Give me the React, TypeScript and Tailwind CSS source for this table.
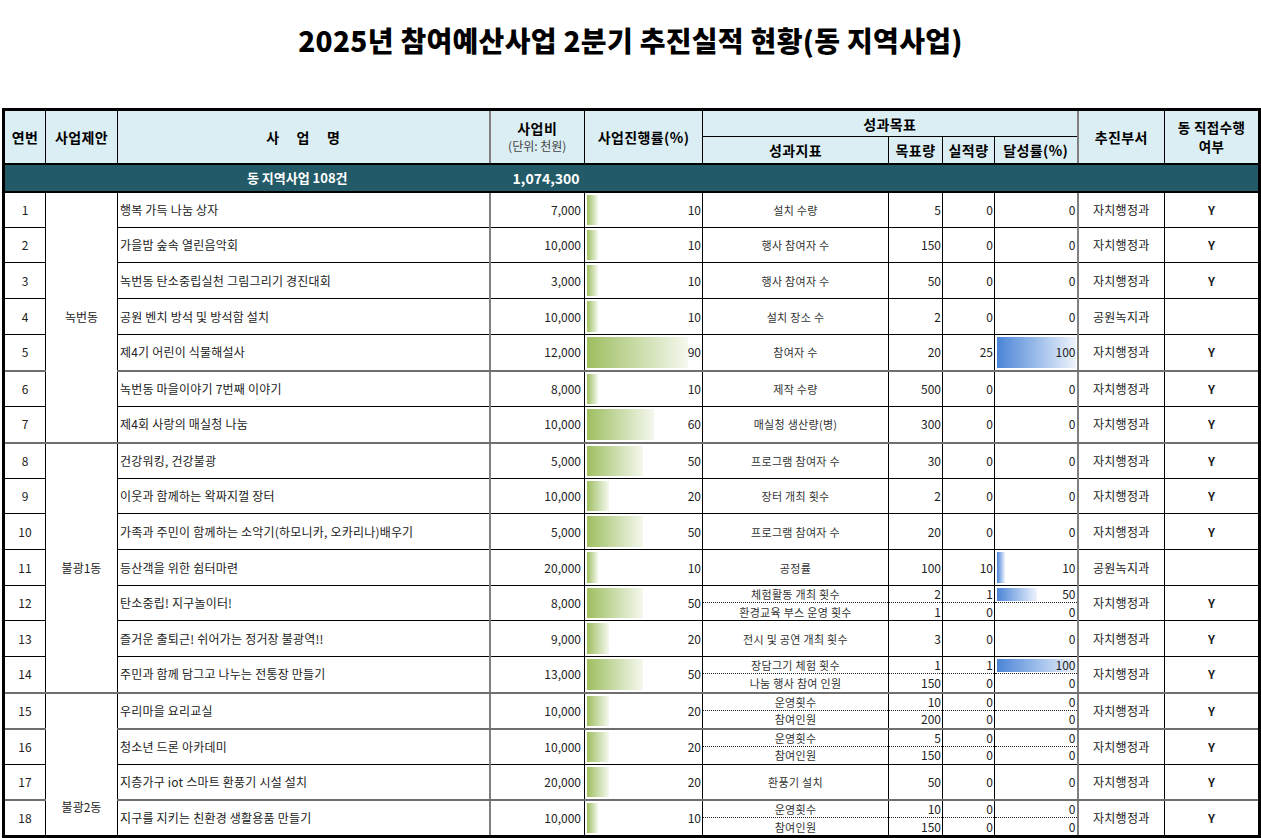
import React from "react";

type Metric = { label: string; target: string; actual: string; rate: number };
type Row = {
  no: number;
  name: string;
  cost: string;
  prog: number;
  metrics: Metric[];
  dept: string;
  y: string;
  h: 35 | 36;
  thick?: boolean;
};

const m = (label: string, target: string, actual: string, rate = 0): Metric => ({ label, target, actual, rate });

const rows: Row[] = [
  { no: 1, name: "행복 가득 나눔 상자", cost: "7,000", prog: 10, metrics: [m("설치 수량", "5", "0")], dept: "자치행정과", y: "Y", h: 36 },
  { no: 2, name: "가을밤 숲속 열린음악회", cost: "10,000", prog: 10, metrics: [m("행사 참여자 수", "150", "0")], dept: "자치행정과", y: "Y", h: 35 },
  { no: 3, name: "녹번동 탄소중립실천 그림그리기 경진대회", cost: "3,000", prog: 10, metrics: [m("행사 참여자 수", "50", "0")], dept: "자치행정과", y: "Y", h: 36 },
  { no: 4, name: "공원 벤치 방석 및 방석함 설치", cost: "10,000", prog: 10, metrics: [m("설치 장소 수", "2", "0")], dept: "공원녹지과", y: "", h: 36 },
  { no: 5, name: "제4기 어린이 식물해설사", cost: "12,000", prog: 90, metrics: [m("참여자 수", "20", "25", 100)], dept: "자치행정과", y: "Y", h: 36, thick: true },
  { no: 6, name: "녹번동 마을이야기 7번째 이야기", cost: "8,000", prog: 10, metrics: [m("제작 수량", "500", "0")], dept: "자치행정과", y: "Y", h: 36 },
  { no: 7, name: "제4회 사랑의 매실청 나눔", cost: "10,000", prog: 60, metrics: [m("매실청 생산량(병)", "300", "0")], dept: "자치행정과", y: "Y", h: 36, thick: true },
  { no: 8, name: "건강워킹, 건강불광", cost: "5,000", prog: 50, metrics: [m("프로그램 참여자 수", "30", "0")], dept: "자치행정과", y: "Y", h: 36 },
  { no: 9, name: "이웃과 함께하는 왁짜지껄 장터", cost: "10,000", prog: 20, metrics: [m("장터 개최 횟수", "2", "0")], dept: "자치행정과", y: "Y", h: 35 },
  { no: 10, name: "가족과 주민이 함께하는 소악기(하모니카, 오카리나)배우기", cost: "5,000", prog: 50, metrics: [m("프로그램 참여자 수", "20", "0")], dept: "자치행정과", y: "Y", h: 36 },
  { no: 11, name: "등산객을 위한 쉼터마련", cost: "20,000", prog: 10, metrics: [m("공정률", "100", "10", 10)], dept: "공원녹지과", y: "", h: 36 },
  { no: 12, name: "탄소중립! 지구놀이터!", cost: "8,000", prog: 50, metrics: [m("체험활동 개최 횟수", "2", "1", 50), m("환경교육 부스 운영 횟수", "1", "0")], dept: "자치행정과", y: "Y", h: 35 },
  { no: 13, name: "즐거운 출퇴근! 쉬어가는 정거장 불광역!!", cost: "9,000", prog: 20, metrics: [m("전시 및 공연 개최 횟수", "3", "0")], dept: "자치행정과", y: "Y", h: 36 },
  { no: 14, name: "주민과 함께 담그고 나누는 전통장 만들기", cost: "13,000", prog: 50, metrics: [m("장담그기 체험 횟수", "1", "1", 100), m("나눔 행사 참여 인원", "150", "0")], dept: "자치행정과", y: "Y", h: 36, thick: true },
  { no: 15, name: "우리마을 요리교실", cost: "10,000", prog: 20, metrics: [m("운영횟수", "10", "0"), m("참여인원", "200", "0")], dept: "자치행정과", y: "Y", h: 36, thick: true },
  { no: 16, name: "청소년 드론 아카데미", cost: "10,000", prog: 20, metrics: [m("운영횟수", "5", "0"), m("참여인원", "150", "0")], dept: "자치행정과", y: "Y", h: 35 },
  { no: 17, name: "지층가구 iot 스마트 환풍기 시설 설치", cost: "20,000", prog: 20, metrics: [m("환풍기 설치", "50", "0")], dept: "자치행정과", y: "Y", h: 36, thick: true },
  { no: 18, name: "지구를 지키는 친환경 생활용품 만들기", cost: "10,000", prog: 10, metrics: [m("운영횟수", "10", "0"), m("참여인원", "150", "0")], dept: "자치행정과", y: "Y", h: 36 },
];

const groups: Record<number, { name: string; span: number; bottom?: boolean }> = {
  1: { name: "녹번동", span: 7 },
  8: { name: "불광1동", span: 7 },
  15: { name: "불광2동", span: 4, bottom: true },
};

const cols = [42, 72, 372, 95, 118, 186, 54, 52, 83, 87, 95];

const th = "border border-black bg-[#daeef3] text-black font-bold text-[14px] tracking-[0.4px] text-center p-0 leading-[16px]";
const label = "text-[11px] tracking-[0.3px] text-[#333]";

function RateBar({ rate, half }: { rate: number; half?: boolean }) {
  if (!rate) return null;
  return (
    <div
      className={
        half
          ? "absolute left-[2px] top-[2px] bottom-[1px] bg-linear-to-r from-[#4a84d5] to-[#eef3fb]"
          : "absolute left-[2px] top-[2px] bottom-[2px] bg-linear-to-r from-[#4a84d5] to-[#eef3fb]"
      }
      style={{ width: rate * 0.79 }}
    />
  );
}

function MetricCells({ metrics, rowBorder }: { metrics: Metric[]; rowBorder: string }) {
  const base = "border border-black p-0 " + rowBorder;
  if (metrics.length === 1) {
    const mt = metrics[0];
    return (
      <>
        <td className={base + " text-center " + label}>{mt.label}</td>
        <td className={base + " text-right pr-[1px]"}>{mt.target}</td>
        <td className={base + " text-right pr-[1px]"}>{mt.actual}</td>
        <td className={base + " relative text-right"}>
          <RateBar rate={mt.rate} />
          <div className="relative pr-[1px]">{mt.rate}</div>
        </td>
      </>
    );
  }
  const top = "h-[17px] flex items-center border-b border-dotted border-[#222]";
  const bot = "h-[17px] flex items-center";
  return (
    <>
      <td className={base}>
        <div className={top + " justify-center whitespace-nowrap " + label}>{metrics[0].label}</div>
        <div className={bot + " justify-center whitespace-nowrap " + label}>{metrics[1].label}</div>
      </td>
      <td className={base}>
        <div className={top + " justify-end pr-[1px]"}>{metrics[0].target}</div>
        <div className={bot + " justify-end pr-[1px]"}>{metrics[1].target}</div>
      </td>
      <td className={base}>
        <div className={top + " justify-end pr-[1px]"}>{metrics[0].actual}</div>
        <div className={bot + " justify-end pr-[1px]"}>{metrics[1].actual}</div>
      </td>
      <td className={base}>
        <div className={top + " relative justify-end"}>
          <RateBar rate={metrics[0].rate} half />
          <span className="relative pr-[1px]">{metrics[0].rate}</span>
        </div>
        <div className={bot + " relative justify-end"}>
          <RateBar rate={metrics[1].rate} half />
          <span className="relative pr-[1px]">{metrics[1].rate}</span>
        </div>
      </td>
    </>
  );
}

export default function App() {
  return (
    <div className="w-[1261px] min-h-[838px] bg-white font-['Noto_Sans_CJK_KR',sans-serif] text-[#222]">
      <div className="h-[108px] pt-[20px]">
        <h1 className="text-center text-[28px] leading-[40px] font-black text-black tracking-[0.3px]">
          2025년 참여예산사업 2분기 추진실적 현황(동 지역사업)
        </h1>
      </div>
      <div className="pl-[2px]">
        <table className="table-fixed border-collapse border-[3px] border-black w-[1256px] text-[12px] leading-[16px]">
          <colgroup>
            {cols.map((w, i) => (
              <col key={i} style={{ width: w }} />
            ))}
          </colgroup>
          <thead>
            <tr className="h-[27px]">
              <th rowSpan={2} className={th + " border-b-2 border-b-black"}>연번</th>
              <th rowSpan={2} className={th + " border-b-2 border-b-black"}>사업제안</th>
              <th rowSpan={2} className={th + " border-b-2 border-b-black"}>
                <div className="flex justify-center gap-[17px]">
                  <span>사</span>
                  <span>업</span>
                  <span>명</span>
                </div>
              </th>
              <th rowSpan={2} className={th + " border-b-2 border-b-black border-l-2 border-l-[#808080]"}>
                <div className="leading-[18px]">사업비</div>
                <div className="text-[12px] font-normal tracking-normal text-[#444] leading-[17px]">(단위: 천원)</div>
              </th>
              <th rowSpan={2} className={th + " border-b-2 border-b-black"}>사업진행률(%)</th>
              <th colSpan={4} className={th}>성과목표</th>
              <th rowSpan={2} className={th + " border-b-2 border-b-black border-l-2 border-l-[#808080]"}>추진부서</th>
              <th rowSpan={2} className={th + " border-b-2 border-b-black"}>
                <div className="text-[13.5px] leading-[19px]">동 직접수행</div>
                <div className="text-[13.5px] leading-[19px]">여부</div>
              </th>
            </tr>
            <tr className="h-[27px]">
              <th className={th + " border-b-2 border-b-black"}>성과지표</th>
              <th className={th + " border-b-2 border-b-black"}>목표량</th>
              <th className={th + " border-b-2 border-b-black"}>실적량</th>
              <th className={th + " border-b-2 border-b-black"}>달성률(%)</th>
            </tr>
          </thead>
          <tbody>
            <tr className="h-[28px] bg-[#225a67] text-white font-bold text-[13px]">
              <td colSpan={3} className="border-y-2 border-y-black border-x-0 p-0 text-center pl-[100px]">
                동 지역사업 108건
              </td>
              <td className="border-y-2 border-y-black border-x-0 p-0 text-right pr-[5px] text-[14px]">1,074,300</td>
              <td colSpan={7} className="border-y-2 border-y-black border-x-0 p-0"></td>
            </tr>
            {rows.map((r) => {
              const rb = r.thick ? "border-b-2 border-b-[#6e6e6e]" : "";
              const c = "border border-black p-0 " + rb;
              const g = groups[r.no];
              return (
                <tr key={r.no} className={r.h === 35 ? "h-[35px]" : "h-[36px]"}>
                  <td className={c + " text-center"}>{r.no}</td>
                  {g && (
                    <td
                      rowSpan={g.span}
                      className={
                        g.bottom
                          ? "border border-black border-b-2 border-b-[#6e6e6e] p-0 text-center align-bottom pb-[20px]"
                          : "border border-black border-b-2 border-b-[#6e6e6e] p-0 text-center"
                      }
                    >
                      {g.name}
                    </td>
                  )}
                  <td className={c + " pl-[2px] tracking-[0.2px]"}>{r.name}</td>
                  <td className={c + " text-right pr-[3px] border-l-2 border-l-[#808080]"}>{r.cost}</td>
                  <td className={c + " relative"}>
                    <div
                      className="absolute left-[2px] top-[2px] bottom-[2px] bg-linear-to-r from-[#9fbe5e] to-[#f5f8ee]"
                      style={{ width: r.prog * 1.12 }}
                    />
                    <div className="relative text-right pr-[1px]">{r.prog}</div>
                  </td>
                  <MetricCells metrics={r.metrics} rowBorder={rb} />
                  <td className={c + " text-center border-l-2 border-l-[#808080] tracking-[0.3px]"}>{r.dept}</td>
                  <td className={c + " text-center font-bold"}>{r.y}</td>
                </tr>
              );
            })}
          </tbody>
        </table>
      </div>
    </div>
  );
}
